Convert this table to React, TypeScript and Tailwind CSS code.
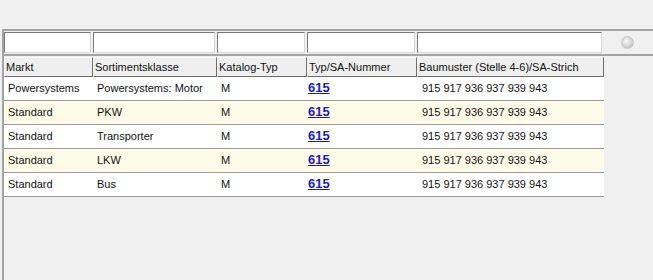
import React from 'react';

const cols = 'grid grid-cols-[89px_124px_90px_110px_187px]';

const headers = ['Markt', 'Sortimentsklasse', 'Katalog-Typ', 'Typ/SA-Nummer', 'Baumuster (Stelle 4-6)/SA-Strich'];

const rows = [
  { markt: 'Powersystems', klasse: 'Powersystems: Motor' },
  { markt: 'Standard', klasse: 'PKW' },
  { markt: 'Standard', klasse: 'Transporter' },
  { markt: 'Standard', klasse: 'LKW' },
  { markt: 'Standard', klasse: 'Bus' },
];

const App: React.FC = () => {
  return (
    <div className="w-[653px] h-[280px] bg-[#f0f0f0] text-[11px] text-[#111] font-['Tahoma','Liberation_Sans',sans-serif] overflow-hidden">
      <div className="h-[29px]" />
      <div className="ml-[2px] h-[251px] border-t-2 border-l-2 border-[#a3a3a3]">
        {/* filter inputs */}
        <div className="flex items-center h-[25px] border-b-2 border-[#a3a3a3]">
          <div className={cols}>
            {headers.map((h) => (
              <div key={h} className="pr-[2px]">
                <div className="h-[21px] bg-white border border-t-[#7a7a7a] border-l-[#7a7a7a] border-b-[#d8d8d8] border-r-[#d8d8d8]" />
              </div>
            ))}
          </div>
          <div className="ml-[17px] w-[13px] h-[13px] rounded-full bg-[radial-gradient(circle_at_40%_35%,#fafafa,#c8c8c8_70%,#b0b0b0)] border border-[#c4c4c4]" />
        </div>

        {/* column headers */}
        <div className="pt-[1px] w-[600px]">
          <div className={`${cols} h-[20px]`}>
            {headers.map((h) => (
              <div
                key={h}
                className="flex items-center pl-[1px] bg-[#efefef] border border-t-[#f8f8f8] border-l-[#f8f8f8] border-b-[#6e6e6e] border-r-[#6e6e6e] leading-none whitespace-nowrap"
              >
                {h}
              </div>
            ))}
          </div>

          {rows.map((r, i) => (
            <div
              key={r.klasse}
              className={`${cols} h-[24px] border-b border-[#9a9a9a] ${i % 2 === 1 ? 'bg-[#fffbe9]' : 'bg-white'}`}
            >
              <div className="flex items-center pl-[4px]">{r.markt}</div>
              <div className="flex items-center pl-[4px]">{r.klasse}</div>
              <div className="flex items-center pl-[4px]">M</div>
              <div className="pl-[1px] pt-[3px]">
                <a href="#" className="text-[13px] font-bold text-[#1a1acc] underline leading-none">
                  615
                </a>
              </div>
              <div className="flex items-center pl-[5px]">915 917 936 937 939 943</div>
            </div>
          ))}
        </div>
      </div>
    </div>
  );
};

export default App;
